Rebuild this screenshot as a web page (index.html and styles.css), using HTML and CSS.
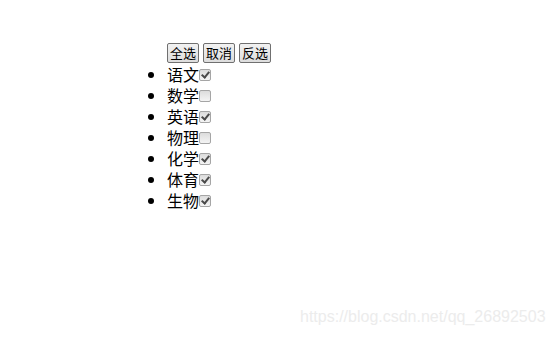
FILE: index.html
```html
<!DOCTYPE html>
<html>
<head>
<meta charset="utf-8">
<link rel="stylesheet" href="styles.css">
</head>
<body>
<div class="wrap">
  <div class="btns"><button class="btn">全选</button> <button class="btn">取消</button> <button class="btn">反选</button></div>
  <ul class="list">
    <li class="item">语文<input class="cb" type="checkbox" checked></li>
    <li class="item">数学<input class="cb" type="checkbox"></li>
    <li class="item">英语<input class="cb" type="checkbox" checked></li>
    <li class="item">物理<input class="cb" type="checkbox"></li>
    <li class="item">化学<input class="cb" type="checkbox" checked></li>
    <li class="item">体育<input class="cb" type="checkbox" checked></li>
    <li class="item">生物<input class="cb" type="checkbox" checked></li>
  </ul>
</div>
<div class="mark">https://blog.csdn.net/qq_26892503</div>
</body>
</html>
```
FILE: styles.css
```css
html, body {
  margin: 0;
  padding: 0;
  background: #fff;
}
body {
  width: 552px;
  height: 338px;
  position: relative;
  overflow: hidden;
  font-family: "Noto Sans CJK SC", "Liberation Sans", sans-serif;
  font-size: 16px;
  color: #000;
}
.wrap {
  padding-top: 43px;
  padding-left: 167px;
}
.btns {
  height: 21px;
  font-size: 0;
  display: flex;
  gap: 4px;
}
.btn {
  font-family: "Noto Sans CJK SC", sans-serif;
  font-size: 13px;
  line-height: 16px;
  height: 20px;
  padding: 0 2px;
  margin: 0;
  border: 1px solid #707070;
  border-radius: 2px;
  background: linear-gradient(#f2f2f2, #dddddd);
  color: #000;
}
.list {
  margin: 0;
  padding: 0;
  list-style: disc;
}
.item {
  height: 21px;
  line-height: 21px;
  display: list-item;
}
.cb {
  -webkit-appearance: none;
  appearance: none;
  box-sizing: border-box;
  width: 12px;
  height: 12px;
  margin: 0;
  border: 1px solid #a5a5a5;
  border-radius: 2px;
  background: linear-gradient(#dcdcdc, #f4f4f4);
  vertical-align: 0px;
  position: relative;
}
.cb:checked::after {
  content: "";
  position: absolute;
  left: 3px;
  top: 0px;
  width: 3px;
  height: 6px;
  border: solid #4a4a4a;
  border-width: 0 2px 2px 0;
  transform: rotate(40deg);
}
.mark {
  position: absolute;
  left: 300px;
  top: 308px;
  font-family: "Liberation Sans", sans-serif;
  font-size: 16px;
  color: #ececec;
}
```
